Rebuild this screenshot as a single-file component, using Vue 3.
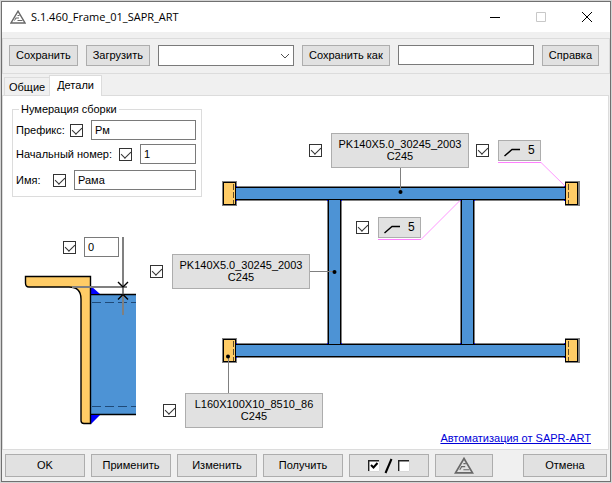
<script setup>
import { ref } from 'vue'

const preset = ref('')
const saveName = ref('')
const prefix = ref('Рм')
const startNumber = ref('1')
const partName = ref('Рама')
const offset = ref('0')

const profiles = [
  { id: 'beam', place: 'at-beam', name: 'PK140X5.0_30245_2003', steel: 'C245' },
  { id: 'post', place: 'at-post', name: 'PK140X5.0_30245_2003', steel: 'C245' },
  { id: 'angle', place: 'at-angle', name: 'L160X100X10_8510_86', steel: 'C245' },
]
const welds = [
  { id: 'end', place: 'at-end', size: 5 },
  { id: 'joint', place: 'at-joint', size: 5 },
]
</script>

<template>
  <div class="window">
    <header class="titlebar">
      <svg class="logo" viewBox="0 0 16 14" aria-hidden="true">
        <path d="M8 1.2 L15 13 H1 Z" />
        <path class="fine" d="M7.5 5.5 H9.5 M5.5 8 H9 M7.5 10.5 H12.5 M4.5 10.5 L6 8" />
      </svg>
      <h1 class="title">S.1.460_Frame_01_SAPR_ART</h1>
      <button class="sys" aria-label="Свернуть">
        <svg viewBox="0 0 12 12"><path d="M1 6.5 H11" /></svg>
      </button>
      <button class="sys" aria-label="Развернуть" disabled>
        <svg viewBox="0 0 12 12"><path d="M1.5 1.5 H10.5 V10.5 H1.5 Z" /></svg>
      </button>
      <button class="sys" aria-label="Закрыть">
        <svg viewBox="0 0 12 12"><path d="M1 1 L11 11 M11 1 L1 11" /></svg>
      </button>
    </header>

    <div class="toolbar">
      <button class="btn">Сохранить</button>
      <button class="btn">Загрузить</button>
      <div class="combo">
        <select v-model="preset" aria-label="Набор параметров"><option value=""></option></select>
        <svg viewBox="0 0 10 6" aria-hidden="true"><path d="M1 1 L5 5 L9 1" /></svg>
      </div>
      <button class="btn">Сохранить как</button>
      <input v-model="saveName" class="field" type="text" aria-label="Имя набора" />
      <button class="btn">Справка</button>
    </div>

    <nav class="tabs" role="tablist">
      <button class="tab" role="tab" aria-selected="false">Общие</button>
      <button class="tab active" role="tab" aria-selected="true">Детали</button>
    </nav>

    <main class="panel">
      <svg class="drawing" viewBox="3 96 604 353" aria-hidden="true">
        <!-- frame members -->
        <g class="halo">
          <rect x="236" y="186" width="330" height="15" />
          <rect x="236" y="343" width="330" height="15" />
          <rect x="327" y="200" width="15" height="144" />
          <rect x="460" y="200" width="15" height="144" />
          <rect x="222" y="181" width="15" height="25" />
          <rect x="222" y="338" width="15" height="25" />
          <rect x="565" y="181" width="15" height="25" />
          <rect x="565" y="338" width="15" height="25" />
        </g>
        <g class="steel">
          <rect x="328.5" y="199.5" width="12" height="145" />
          <rect x="461.5" y="199.5" width="12" height="145" />
          <rect x="235.5" y="187.5" width="330" height="12" />
          <rect x="235.5" y="344.5" width="330" height="12" />
        </g>
        <g class="plate">
          <rect x="223.5" y="182.5" width="12" height="22" />
          <rect x="223.5" y="339.5" width="12" height="22" />
          <rect x="565.5" y="182.5" width="12" height="22" />
          <rect x="565.5" y="339.5" width="12" height="22" />
        </g>
        <path class="hidden-edge" d="M233.5 184 V204 M233.5 341 V361 M568.5 184 V204 M568.5 341 V361" />
        <path class="weld" d="M236 186h1v1h-1z M236 200h1v1h-1z M236 343h1v1h-1z M236 357h1v1h-1z M564 186h1v1h-1z M564 200h1v1h-1z M564 343h1v1h-1z M564 357h1v1h-1z M327 200h1v1h-1z M341 200h1v1h-1z M460 200h1v1h-1z M474 200h1v1h-1z M327 343h1v1h-1z M341 343h1v1h-1z M460 343h1v1h-1z M474 343h1v1h-1z" />

        <!-- leaders -->
        <path class="leader" d="M400.5 168 V192 M310 271.5 H334 M228.5 356 V393" />
        <circle cx="400.5" cy="192" r="2" />
        <circle cx="334.5" cy="272" r="2" />
        <circle cx="228" cy="356.5" r="2" />
        <path class="weld-leader" d="M498 162.5 H541 M378 239.5 H421" />
        <path class="weld-leader thin" d="M541 162.5 L565 186 M421 239.5 L460 200.5" />

        <!-- section detail -->
        <rect class="body" x="91" y="294" width="45" height="121" />
        <path class="outline" d="M91 294.5 H136 M91 414.5 H136" />
        <path class="hidden-edge long" d="M92 302.5 H136 M92 406.5 H136" />
        <path class="weld" d="M91 286 L100 294 H91 Z M91 415 H100 L91 424 Z" />
        <path class="angle" d="M25.5 276.5 H90.5 V423.5 H84 Q81 423.5 81 420.5 V299 Q81 287 69 287 H29 Q25.5 287 25.5 283 Z" />
        <path class="dim" d="M123 237 V315 M72 287 H127" />
        <path class="outline" d="M118 282 L123 287 L128 282 M118 299.5 L123 294.5 L128 299.5" />
      </svg>

      <fieldset class="group">
        <legend>Нумерация сборки</legend>
        <div class="row">
          <label class="cap-prefix" for="prefix">Префикс:</label>
          <input class="check" type="checkbox" checked aria-label="Префикс включён" />
          <input id="prefix" v-model="prefix" class="field" type="text" />
        </div>
        <div class="row">
          <label class="cap-number" for="number">Начальный номер:</label>
          <input class="check" type="checkbox" checked aria-label="Номер включён" />
          <input id="number" v-model="startNumber" class="field" type="text" />
        </div>
        <div class="row">
          <label class="cap-name" for="name">Имя:</label>
          <input class="check" type="checkbox" checked aria-label="Имя включено" />
          <input id="name" v-model="partName" class="field" type="text" />
        </div>
      </fieldset>

      <div v-for="p in profiles" :key="p.id" class="callout" :class="p.place">
        <input class="check" type="checkbox" checked :aria-label="p.name" />
        <button class="btn profile">{{ p.name }}<br />{{ p.steel }}</button>
      </div>

      <div v-for="w in welds" :key="w.id" class="callout" :class="w.place">
        <input class="check" type="checkbox" checked aria-label="Сварной шов" />
        <button class="btn weld-btn">
          <svg viewBox="0 0 16 9" aria-hidden="true"><path d="M0.5 8 L8 1.5 H16" /></svg>
          <span>{{ w.size }}</span>
        </button>
      </div>

      <div class="callout at-offset">
        <input class="check" type="checkbox" checked aria-label="Отступ включён" />
        <input v-model="offset" class="field offset" type="text" aria-label="Отступ" />
      </div>

      <a class="link" href="#">Автоматизация от SAPR-ART</a>
    </main>

    <footer class="actions">
      <button class="btn">OK</button>
      <button class="btn">Применить</button>
      <button class="btn">Изменить</button>
      <button class="btn">Получить</button>
      <button class="btn" aria-label="Включить или выключить все">
        <svg class="toggle-icon" viewBox="0 0 44 16" aria-hidden="true">
          <path class="box-fill" d="M1 2 H13 V14 H1 Z M31 2 H43 V14 H31 Z" />
          <path class="box-light" d="M1 13.5 H12.5 V2 M31 13.5 H42.5 V2" />
          <path class="box-dark" d="M1.7 13 V2.7 H12 M31.7 13 V2.7 H42" />
          <path class="tick" d="M4 7 L6.5 9.5 L10.5 5" />
          <path class="slash" d="M18.5 15 L24.5 1" />
        </svg>
      </button>
      <button class="btn narrow" aria-label="SAPR-ART">
        <svg class="logo big" viewBox="0 0 16 14" aria-hidden="true">
          <path d="M8 1.2 L15 13 H1 Z" />
          <path class="fine" d="M7.5 5.5 H9.5 M5.5 8 H9 M7.5 10.5 H12.5 M4.5 10.5 L6 8" />
        </svg>
      </button>
      <button class="btn cancel">Отмена</button>
    </footer>
  </div>
</template>

<style>
body {
  margin: 0;
  background: #d4d4d4;
}
</style>

<style scoped>
* {
  box-sizing: border-box;
}

.window {
  display: flex;
  flex-direction: column;
  min-height: calc(100vh - 2px);
  margin: 1px;
  border: 1px solid #707070;
  background: #f0f0f0;
  color: #000;
  font: 11px/13px "Liberation Sans", Arial, sans-serif;
}

button,
input,
select {
  margin: 0;
  font: inherit;
  color: inherit;
}

.titlebar {
  display: flex;
  align-items: center;
  height: 30px;
  padding-left: 8px;
  background: #fff;
}

.logo {
  width: 16px;
  height: 14px;
  fill: none;
  stroke: #686868;
  stroke-width: 1.4;
}

.logo.big {
  width: 22px;
  height: 17px;
}

.logo .fine {
  stroke-width: 1;
}

.title {
  flex: 1;
  margin: 0 0 0 5px;
  font: 11px/16px "Open Sans", "Noto Sans", sans-serif;
}

.sys {
  display: flex;
  align-items: center;
  justify-content: center;
  width: 46px;
  height: 30px;
  padding: 0;
  border: 0;
  background: none;
}

.sys svg {
  width: 12px;
  height: 12px;
  fill: none;
  stroke: #000;
}

.sys:disabled svg {
  stroke: #c8c8c8;
}

.toolbar {
  display: flex;
  align-items: center;
  gap: 8px;
  height: 36px;
  margin-top: 6px;
  padding: 0 10px 2px 6px;
  border: 1px solid #dcdcdc;
}

.btn {
  padding: 0 6px;
  border: 1px solid #adadad;
  border-radius: 0;
  background: #e1e1e1;
  text-align: center;
}

.toolbar .btn {
  height: 21px;
  white-space: nowrap;
}

.field {
  flex: 1;
  min-width: 0;
  height: 20px;
  padding: 0 3px;
  border: 1px solid #7a7a7a;
  border-radius: 0;
  background: #fff;
  outline: none;
}

.combo,
.toolbar .field {
  flex: 1 1 120px;
}

.combo {
  position: relative;
  height: 21px;
}

.combo select {
  display: block;
  width: 100%;
  height: 100%;
  padding: 0 18px 0 3px;
  border: 1px solid #7a7a7a;
  border-radius: 0;
  background: #fff;
  appearance: none;
}

.combo svg {
  position: absolute;
  top: 8px;
  right: 4px;
  width: 10px;
  height: 6px;
  fill: none;
  stroke: #505050;
  pointer-events: none;
}

.tabs {
  display: flex;
  align-items: flex-end;
  height: 21px;
  padding-left: 2px;
}

.tab {
  height: 18px;
  padding: 1px 4px 0;
  border: 1px solid #dcdcdc;
  border-bottom: 0;
  border-right: 0;
  background: #f0f0f0;
}

.tab.active {
  z-index: 1;
  height: 21px;
  margin-bottom: -1px;
  padding: 0 7px 2px;
  border-right: 1px solid #dcdcdc;
  background: #fff;
}

.panel {
  position: relative;
  flex: 1;
  min-height: 355px;
  margin-right: 1px;
  padding: 7px 9px;
  border: 1px solid #dcdcdc;
  background: #fff;
}

.drawing {
  position: absolute;
  top: 0;
  left: 0;
  width: 604px;
  height: 353px;
}

.halo {
  fill: #808080;
}

.steel {
  fill: #4d93d5;
  stroke: #000;
}

.plate {
  fill: #ffcc66;
  stroke: #000;
}

.body {
  fill: #4d93d5;
}

.outline {
  fill: none;
  stroke: #000;
  stroke-width: 1.4;
}

.angle {
  fill: #ffcc66;
  stroke: #000;
  stroke-width: 1.4;
}

.hidden-edge {
  stroke: #5c4a28;
  stroke-dasharray: 6 2;
}

.hidden-edge.long {
  stroke: #1f4a78;
  stroke-dasharray: 9 4;
}

.weld {
  fill: #0000ff;
}

.leader {
  stroke: #808080;
}

.dim {
  stroke: #808080;
  stroke-width: 2;
}

.weld-leader {
  fill: none;
  stroke: #ff80ff;
}

.weld-leader.thin {
  stroke: #ff98ff;
}

.group {
  position: relative;
  width: 190px;
  min-width: 0;
  margin: 0;
  padding: 0 5px 6px 3px;
  border: 1px solid #dcdcdc;
}

.group legend {
  margin-left: 3px;
  padding: 0 2px;
}

.row {
  display: flex;
  align-items: center;
  gap: 8px;
  margin-top: 4px;
}

.row:last-child {
  margin-top: 6px;
}

.row label {
  white-space: nowrap;
}

.cap-prefix {
  width: 46px;
}

.cap-number {
  width: 95px;
}

.cap-name {
  width: 29px;
}

.check {
  position: relative;
  flex: none;
  width: 13px;
  height: 13px;
  border: 1px solid #333;
  background: #fff;
  appearance: none;
}

.check:checked::after {
  content: "";
  position: absolute;
  top: 0;
  left: 3px;
  width: 5px;
  height: 8px;
  border: solid #333;
  border-width: 0 1px 1px 0;
  transform: rotate(45deg);
}

.callout {
  position: absolute;
  display: flex;
  align-items: center;
  gap: 9px;
}

.profile {
  width: 138px;
  height: 35px;
  padding: 0 2px 2px;
  line-height: 12px;
}

.weld-btn {
  display: flex;
  align-items: center;
  gap: 8px;
  width: 43px;
  height: 21px;
  padding: 0 5px;
  font-size: 12px;
}

.weld-btn svg {
  width: 16px;
  height: 9px;
  margin-top: 3px;
  fill: none;
  stroke: #000;
  stroke-width: 1.4;
}

.offset {
  width: 35px;
}

.at-beam {
  top: 37px;
  left: 306px;
}

.at-post {
  top: 158px;
  left: 147px;
}

.at-angle {
  top: 297px;
  left: 160px;
}

.at-end {
  top: 44px;
  left: 473px;
}

.at-joint {
  top: 121px;
  left: 353px;
}

.at-offset {
  top: 141px;
  left: 60px;
  gap: 8px;
}

.link {
  position: absolute;
  right: 17px;
  bottom: 4px;
  color: #0000d8;
}

.actions {
  display: flex;
  gap: 6px;
  padding: 4px 3px;
}

.actions .btn {
  display: flex;
  flex: 0 1 80px;
  align-items: center;
  justify-content: center;
  height: 23px;
}

.actions .narrow {
  flex-basis: 58px;
}

.actions .cancel {
  flex-basis: 84px;
  margin-left: auto;
}

.toggle-icon {
  flex: none;
  width: 44px;
  height: 16px;
  fill: none;
}

.box-dark {
  stroke: #202020;
  stroke-width: 1.4;
}

.box-light {
  stroke: #d8d8d8;
}

.box-fill {
  fill: #fff;
}

.tick {
  stroke: #000;
  stroke-width: 2;
}

.slash {
  stroke: #000;
  stroke-width: 2;
}
</style>
